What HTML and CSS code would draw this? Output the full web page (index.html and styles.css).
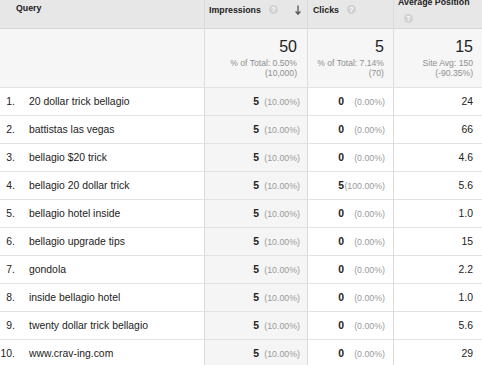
FILE: index.html
```html
<!DOCTYPE html>
<html lang="en">
<head>
<meta charset="utf-8">
<title>Query report</title>
<link rel="stylesheet" href="styles.css">
</head>
<body>
<div class="report">
  <div class="row head">
    <div class="cell c-query"><span class="hlabel">Query</span></div>
    <div class="cell c-imp">
      <span class="hlabel">Impressions</span><span class="help">?</span>
      <svg class="sort" width="6" height="10" viewBox="0 0 6 10"><path d="M3 0.5 V9 M0.6 6.4 L3 9.2 L5.4 6.4" fill="none" stroke="#555" stroke-width="1.3"/></svg>
    </div>
    <div class="cell c-clk"><span class="hlabel">Clicks</span><span class="help">?</span></div>
    <div class="cell c-pos"><div class="wrap"><span class="hlabel">Average Position</span> <span class="help">?</span></div></div>
  </div>

  <div class="row summary">
    <div class="cell c-query"></div>
    <div class="cell c-imp"><div class="big">50</div><div class="sub">% of Total: 0.50%<br>(10,000)</div></div>
    <div class="cell c-clk"><div class="big">5</div><div class="sub">% of Total: 7.14%<br>(70)</div></div>
    <div class="cell c-pos"><div class="big">15</div><div class="sub">Site Avg: 150<br>(-90.35%)</div></div>
  </div>

  <div class="row data">
    <div class="cell c-query"><span class="idx">1.</span><span class="q">20 dollar trick bellagio</span></div>
    <div class="cell c-imp"><b>5</b><span class="pct">(10.00%)</span></div>
    <div class="cell c-clk"><b>0</b><span class="pct">(0.00%)</span></div>
    <div class="cell c-pos">24</div>
  </div>
  <div class="row data">
    <div class="cell c-query"><span class="idx">2.</span><span class="q">battistas las vegas</span></div>
    <div class="cell c-imp"><b>5</b><span class="pct">(10.00%)</span></div>
    <div class="cell c-clk"><b>0</b><span class="pct">(0.00%)</span></div>
    <div class="cell c-pos">66</div>
  </div>
  <div class="row data">
    <div class="cell c-query"><span class="idx">3.</span><span class="q">bellagio $20 trick</span></div>
    <div class="cell c-imp"><b>5</b><span class="pct">(10.00%)</span></div>
    <div class="cell c-clk"><b>0</b><span class="pct">(0.00%)</span></div>
    <div class="cell c-pos">4.6</div>
  </div>
  <div class="row data">
    <div class="cell c-query"><span class="idx">4.</span><span class="q">bellagio 20 dollar trick</span></div>
    <div class="cell c-imp"><b>5</b><span class="pct">(10.00%)</span></div>
    <div class="cell c-clk"><b>5</b><span class="pct">(100.00%)</span></div>
    <div class="cell c-pos">5.6</div>
  </div>
  <div class="row data">
    <div class="cell c-query"><span class="idx">5.</span><span class="q">bellagio hotel inside</span></div>
    <div class="cell c-imp"><b>5</b><span class="pct">(10.00%)</span></div>
    <div class="cell c-clk"><b>0</b><span class="pct">(0.00%)</span></div>
    <div class="cell c-pos">1.0</div>
  </div>
  <div class="row data">
    <div class="cell c-query"><span class="idx">6.</span><span class="q">bellagio upgrade tips</span></div>
    <div class="cell c-imp"><b>5</b><span class="pct">(10.00%)</span></div>
    <div class="cell c-clk"><b>0</b><span class="pct">(0.00%)</span></div>
    <div class="cell c-pos">15</div>
  </div>
  <div class="row data">
    <div class="cell c-query"><span class="idx">7.</span><span class="q">gondola</span></div>
    <div class="cell c-imp"><b>5</b><span class="pct">(10.00%)</span></div>
    <div class="cell c-clk"><b>0</b><span class="pct">(0.00%)</span></div>
    <div class="cell c-pos">2.2</div>
  </div>
  <div class="row data">
    <div class="cell c-query"><span class="idx">8.</span><span class="q">inside bellagio hotel</span></div>
    <div class="cell c-imp"><b>5</b><span class="pct">(10.00%)</span></div>
    <div class="cell c-clk"><b>0</b><span class="pct">(0.00%)</span></div>
    <div class="cell c-pos">1.0</div>
  </div>
  <div class="row data">
    <div class="cell c-query"><span class="idx">9.</span><span class="q">twenty dollar trick bellagio</span></div>
    <div class="cell c-imp"><b>5</b><span class="pct">(10.00%)</span></div>
    <div class="cell c-clk"><b>0</b><span class="pct">(0.00%)</span></div>
    <div class="cell c-pos">5.6</div>
  </div>
  <div class="row data">
    <div class="cell c-query"><span class="idx">10.</span><span class="q">www.crav-ing.com</span></div>
    <div class="cell c-imp"><b>5</b><span class="pct">(10.00%)</span></div>
    <div class="cell c-clk"><b>0</b><span class="pct">(0.00%)</span></div>
    <div class="cell c-pos">29</div>
  </div>
</div>
</body>
</html>
```

FILE: styles.css
```css
html, body {
  margin: 0;
  padding: 0;
  background: #ffffff;
  overflow: hidden;
}

.report {
  width: 482px;
  margin-top: -9px;
  font-family: "Liberation Sans", Arial, sans-serif;
  color: #222;
}

.row {
  display: grid;
  grid-template-columns: 204px 103px 86px 89px;
}

.cell {
  box-sizing: border-box;
  white-space: nowrap;
  min-width: 0;
}

.c-imp, .c-clk, .c-pos {
  border-left: 1px solid #dcdcdc;
}

/* header */
.head .cell {
  height: 38px;
  background: #e7e7e7;
  border-bottom: 1px solid #d6d6d6;
  display: flex;
  align-items: center;
  font-size: 8.8px;
  font-weight: bold;
  color: #222;
}
.head .c-query { padding: 0 0 4px 16px; }
.head .c-imp { padding: 0 6px 0 4px; }
.head .c-clk { padding: 0 6px 0 5px; }
.head .c-pos { padding: 0 6px 0 4px; white-space: normal; }
.head .wrap { line-height: 14.5px; }

.help {
  display: inline-block;
  width: 9px;
  height: 9px;
  margin-left: 8px;
  border-radius: 50%;
  background: #d2d2d2;
  color: #fff;
  font-size: 7px;
  font-weight: bold;
  line-height: 9px;
  text-align: center;
  vertical-align: -1px;
}
.c-pos .help { margin-left: 6px; }

.sort {
  margin-left: auto;
  display: block;
}

/* summary */
.summary .cell {
  height: 59px;
  background: #f6f6f6;
  border-bottom: 1px solid #e2e2e2;
  padding-top: 9px;
  display: flex;
  flex-direction: column;
  align-items: flex-end;
}
.summary .c-imp { padding-right: 10px; }
.summary .c-clk, .summary .c-pos { padding-right: 9px; }

.big {
  font-size: 16px;
  line-height: 18px;
  color: #222;
}
.sub {
  margin-top: 2px;
  font-size: 8.6px;
  line-height: 10px;
  color: #8f8f8f;
  text-align: right;
}

/* data rows */
.data .cell {
  height: 28px;
  border-bottom: 1px solid #e2e2e2;
  display: flex;
  align-items: center;
  justify-content: flex-end;
  font-size: 10.4px;
}
.data .c-query { justify-content: flex-start; }
.data .c-imp { background: #f5f5f5; padding-right: 7px; }
.data .c-clk { padding-right: 8px; }
.data .c-pos { padding-right: 9px; }

.idx {
  display: inline-block;
  width: 15px;
  text-align: right;
}
.q { margin-left: 14px; }

.data b { font-weight: bold; }

.pct {
  display: inline-block;
  min-width: 41px;
  text-align: right;
  font-size: 8.8px;
  color: #9a9a9a;
}
```
